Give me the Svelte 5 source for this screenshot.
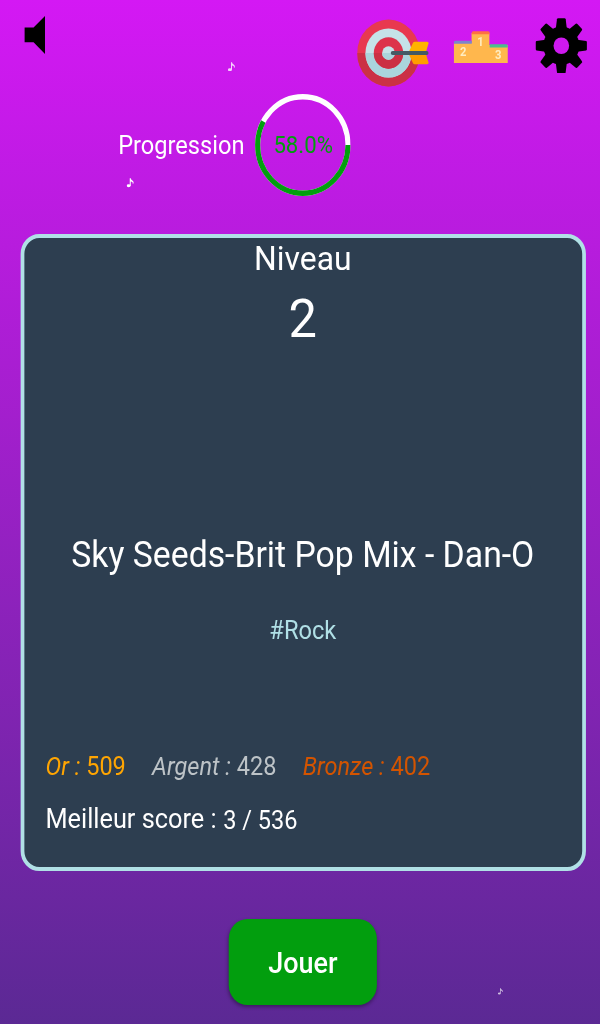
<script>
  const progress = 58;
  const radius = 48.2;
  const length = 2 * Math.PI * radius;
  const medals = [
    { name: 'Or', score: 509, tone: 'gold' },
    { name: 'Argent', score: 428, tone: 'silver' },
    { name: 'Bronze', score: 402, tone: 'bronze' }
  ];
  const notes = [
    { x: 242.5, y: 61.5, w: 8.5, o: 0.8 },
    { x: 134.5, y: 178, w: 8.5, o: 1 },
    { x: 531, y: 988, w: 6, o: 0.7 }
  ];
  const teeth = [0, 45, 90, 135, 180, 225, 270, 315];
</script>

<div class="viewport">
  <main class="screen">
    <header class="toolbar">
      <svg class="speaker" viewBox="0 0 22 38" aria-hidden="true"><path d="M0 11.5H9.8L22 0V38L9.8 26.3H0Z" /></svg>
      <svg class="target" viewBox="0 0 78 68" aria-hidden="true">
        <circle cx="33.4" cy="34" r="33.4" fill="#e8394f" />
        <path d="M0 34a33.4 33.4 0 0 0 66.8 0Z" fill="#cb3145" />
        <circle cx="33.4" cy="34" r="24.6" fill="#c5e3e8" />
        <path d="M8.8 34a24.6 24.6 0 0 0 49.2 0Z" fill="#aad5dc" />
        <circle cx="33.4" cy="34" r="15.7" fill="#dd334a" />
        <path d="M17.7 34a15.7 15.7 0 0 0 31.4 0Z" fill="#cb3043" />
        <circle cx="33.4" cy="34" r="6.8" fill="#c5e3e8" />
        <path d="M26.6 34a6.8 6.8 0 0 0 13.6 0Z" fill="#aad5dc" />
        <path d="M54.5 34 59.4 24q.6-1.2 2-1.2H74.5q2 0 1.6 1.6L73 34Z" fill="#ffb300" />
        <path d="M54.5 34 59.4 44q.6 1.2 2 1.2H74.5q2 0 1.6-1.6L73 34Z" fill="#ff9d00" />
        <rect x="35.8" y="31.9" width="40.3" height="4.2" rx="2.1" fill="#455a64" />
      </svg>
      <svg class="podium" viewBox="0 0 58 32" aria-hidden="true">
        <path d="M0 12H19V2H38V14H57.6V32H0Z" fill="#ffb74d" />
        <path d="M0 12.8V11.3Q0 9.7 1.6 9.7H19.2V12.8Z" fill="#7b86cb" />
        <path d="M19.2 3.3V1.9Q19.2.3 20.8.3H36.7Q38.3.3 38.3 1.9V3.3Z" fill="#ff7043" />
        <path d="M38.3 16.6V13.3H56Q57.6 13.3 57.6 14.9V16.6Z" fill="#4bbd8d" />
        <text x="10" y="25">2</text><text x="28.5" y="15.5">1</text><text x="47.5" y="28.3">3</text>
      </svg>
      <svg class="gear" viewBox="-28 -28 56 56" aria-hidden="true">
        <mask id="hub">
          <rect x="-28" y="-28" width="56" height="56" fill="#fff" />
          <circle r="8.4" fill="#000" />
        </mask>
        <g mask="url(#hub)">
          <circle r="19.4" />
          {#each teeth as angle}
            <path transform="rotate({angle})" d="M-6-17 -4.7-26.7Q-4.5-27.8-3.4-27.8H3.4Q4.5-27.8 4.7-26.7L6-17Z" />
          {/each}
        </g>
      </svg>
    </header>

    <section class="progress">
      <span class="label">Progression</span>
      <div class="ring">
        <svg viewBox="0 0 102 102" aria-hidden="true">
          <circle cx="51" cy="51" r={radius} stroke="#fff" />
          <circle cx="51" cy="51" r={radius} stroke="#029e0e" stroke-dasharray="{(length * progress) / 100} {length}" />
        </svg>
        <span>{progress.toFixed(1)}%</span>
      </div>
    </section>

    <section class="card">
      <div class="level">Niveau</div>
      <div class="number">2</div>
      <h1>Sky Seeds-Brit Pop Mix - Dan-O</h1>
      <div class="tag">#Rock</div>
      <div class="medals">
        {#each medals as medal}
          <span class={medal.tone}><i>{medal.name} :</i> {medal.score}</span>
        {/each}
      </div>
      <div class="best"><span>Meilleur score :</span><span class="value">3 / 536</span></div>
    </section>

    <button>Jouer</button>

    {#each notes as n}
      <svg class="note" viewBox="0 0 8 9" style="left:{n.x}px;top:{n.y}px;width:{n.w}px;opacity:{n.o}" aria-hidden="true">
        <ellipse cx="2.1" cy="7.3" rx="2" ry="1.4" /><path d="M3.2 7.2V.3H4.2Q4.5 2 6.2 2.5Q7.7 3.4 6.8 5.3H6.1Q6.7 3.6 4.2 3.2V7.2Z" />
      </svg>
    {/each}
  </main>
</div>

<style>
  :global(body) { margin: 0; overflow: hidden; }
  .viewport { width: 600px; height: 1024px; overflow: hidden; }
  /* The design is 640 wide and is squeezed to the 600 wide viewport. */
  .screen {
    position: relative;
    width: 640px;
    height: 1024px;
    transform: scaleX(0.9375);
    transform-origin: 0 0;
    display: flex;
    flex-direction: column;
    background: linear-gradient(#d418f4, #5b2994);
    color: #fff;
    font-family: Roboto, sans-serif;
  }
  .toolbar { height: 94px; display: flex; align-items: flex-start; flex: none; }
  .speaker { width: 22px; height: 38px; margin: 15.5px 0 0 26px; }
  .target { width: 78px; height: 68px; margin: 19px 0 0 auto; }
  .podium { width: 58px; height: 32px; margin: 31px 0 0 25px; }
  .podium text { font: 700 12px Roboto, sans-serif; fill: #ffecc0; text-anchor: middle; }
  .gear { width: 55.5px; height: 55.5px; margin: 17.5px 14px 0 29px; }
  .progress { display: flex; align-items: center; height: 102px; padding-left: 126px; gap: 12.4px; flex: none; }
  .label { width: 134px; font-size: 25.2px; white-space: nowrap; }
  .ring { width: 102px; height: 102px; display: grid; place-items: center; font-size: 23.7px; color: #029e0e; }
  .ring svg, .ring span { grid-area: 1 / 1; }
  .ring circle { fill: none; stroke-width: 5.4; }
  .card {
    box-sizing: border-box;
    width: 603px;
    height: 637px;
    margin: 38px 0 0 21.5px;
    border: 4px solid #b0e0e6;
    border-radius: 20px;
    background: #2d3e50;
    display: flex;
    flex-direction: column;
    flex: none;
  }
  .level { height: 42px; line-height: 40px; font-size: 34px; text-align: center; }
  .number { height: 78px; line-height: 78px; font-size: 54px; text-align: center; }
  h1 { margin: 174px 0 0; height: 46px; line-height: 46px; font-size: 36px; font-weight: 400; text-align: center; white-space: nowrap; }
  .tag { margin-top: 36px; height: 34px; line-height: 34px; font-size: 25.2px; text-align: center; color: #b0e0e6; }
  .medals { display: flex; gap: 28px; margin: 101px 0 0 23px; height: 36px; line-height: 36px; font-size: 25.1px; white-space: nowrap; }
  .gold { color: #ffa502; }
  .silver { color: #bdc3c7; }
  .bronze { color: #d35400; }
  .best { display: flex; gap: 7px; margin: 16px 0 0 23px; height: 36px; line-height: 36px; font-size: 27px; white-space: nowrap; }
  .value { font-size: 25.1px; padding-top: 2px; }
  button {
    width: 158px;
    height: 86px;
    margin: 48px 0 0 244px;
    padding: 2px 0 0;
    border: 0;
    border-radius: 20px;
    background: #029e0e;
    box-shadow: 0 2px 4px rgb(0 0 0 / 35%);
    color: #fff;
    font: 500 28.8px Roboto, sans-serif;
    flex: none;
  }
  .note { position: absolute; fill: #fff; }
</style>
